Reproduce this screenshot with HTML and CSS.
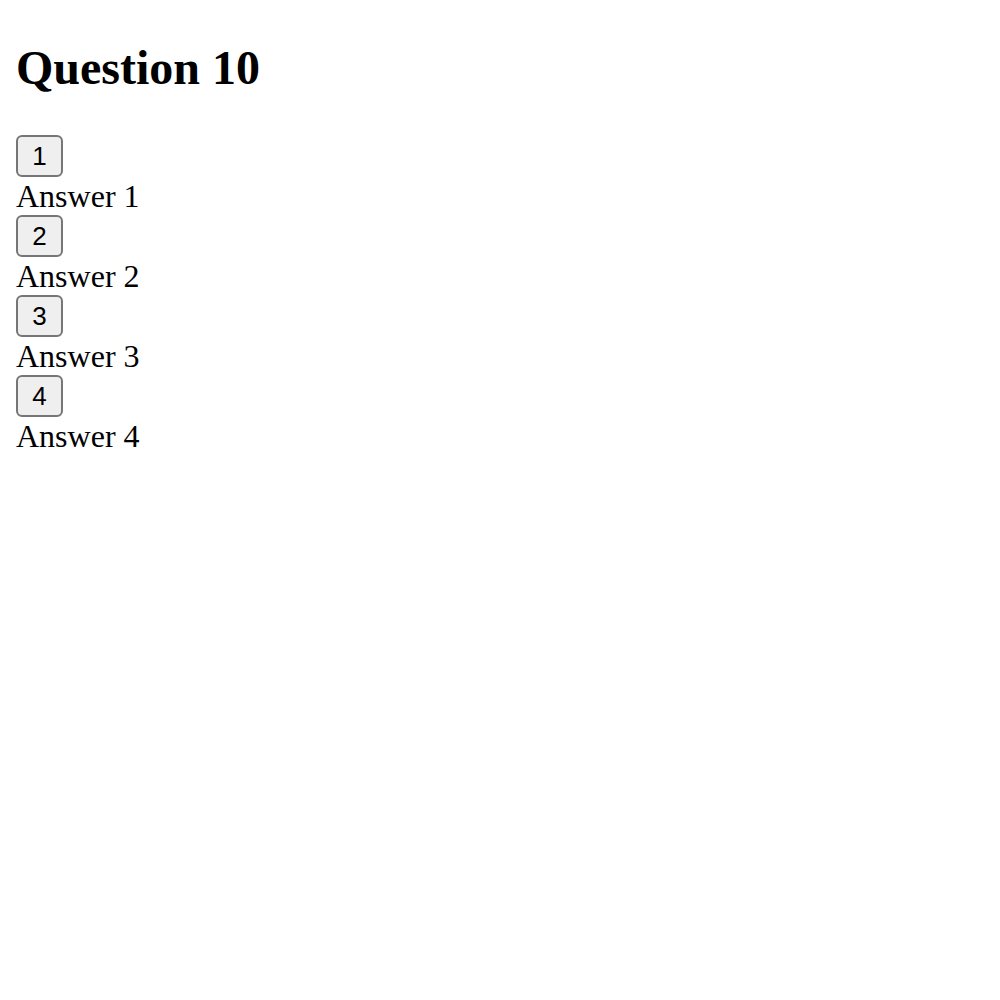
FILE: index.html
```html
<!DOCTYPE html>
<html>
<head>
<meta charset="utf-8">
<link rel="stylesheet" href="styles.css">
</head>
<body>
<section class="quiz">
  <h1 class="title">Question 10</h1>
  <div class="answers">
    <div class="answer"><button class="pick">1</button><div class="label">Answer 1</div></div>
    <div class="answer"><button class="pick">2</button><div class="label">Answer 2</div></div>
    <div class="answer"><button class="pick">3</button><div class="label">Answer 3</div></div>
    <div class="answer"><button class="pick">4</button><div class="label">Answer 4</div></div>
  </div>
</section>
</body>
</html>
```

FILE: styles.css
```css
html, body {
  background: #ffffff;
}
body {
  margin: 0;
  padding: 24px 16px 16px 16px;
  font-family: "Liberation Serif", "Times New Roman", serif;
  font-size: 32px;
  color: #000000;
}
.quiz {
  display: block;
}
.title {
  font-size: 48px;
  font-weight: bold;
  margin: 16px 0 40px 0;
  line-height: 55px;
}
.answers {
  display: flex;
  flex-direction: column;
}
.answer {
  display: flex;
  flex-direction: column;
  align-items: flex-start;
}
.pick {
  box-sizing: border-box;
  width: 47px;
  height: 42px;
  margin: 0 0 1px 0;
  padding: 0;
  border: 2px solid #767676;
  border-radius: 6px;
  background: #efefef;
  font-family: "Liberation Sans", Arial, sans-serif;
  font-size: 26px;
  color: #000000;
  line-height: 38px;
  text-align: center;
}
.label {
  line-height: 37px;
}
```
